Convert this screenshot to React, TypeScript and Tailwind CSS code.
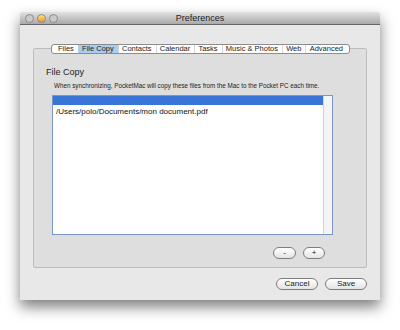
import React from 'react';

const tabs = ['Files', 'File Copy', 'Contacts', 'Calendar', 'Tasks', 'Music & Photos', 'Web', 'Advanced'];

const Light: React.FC<{ color: string }> = ({ color }) => (
  <span className={`block w-[9px] h-[9px] rounded-full border border-[#8a8a8a] ${color}`} />
);

const Pill: React.FC<{ label: string; className?: string }> = ({ label, className = '' }) => (
  <button
    className={`h-[12px] rounded-full border border-[#7d7d7d] bg-gradient-to-b from-white to-[#e4e4e4] text-[8px] leading-none text-[#222] flex items-center justify-center ${className}`}
  >
    {label}
  </button>
);

const App: React.FC = () => {
  return (
    <div className="w-[400px] h-[330px] bg-white overflow-hidden" style={{ fontFamily: '"Liberation Sans", Arial, sans-serif' }}>
      <div className="ml-[20px] mt-[12px] w-[360px] h-[288px] flex flex-col bg-[#e8e8e8] shadow-[0_7px_14px_rgba(0,0,0,0.5)] rounded-t-[3px]">
        {/* Title bar */}
        <div className="h-[13px] relative flex items-center justify-center bg-gradient-to-b from-[#e2e2e2] to-[#a9a9a9] border-b border-[#666] rounded-t-[3px]">
          <div className="absolute left-[5px] top-[2px] flex gap-[3px]">
            <Light color="bg-[#c9c9c9]" />
            <Light color="bg-gradient-to-b from-[#ffe27a] to-[#f19a1c]" />
            <Light color="bg-[#c9c9c9]" />
          </div>
          <span className="text-[9px] leading-none text-[#222]">Preferences</span>
        </div>

        {/* Body */}
        <div className="flex-1 flex flex-col px-[13px] pt-[23px]">
          <div className="relative h-[220px] border border-[#bdbdbd] bg-[#dedede] rounded-[2px]">
            <div className="absolute left-[17px] top-[-5px] h-[10px] w-[299px] flex items-center justify-between px-[2px] bg-white border border-[#8c8c8c] rounded-[3px] text-[7.5px] leading-none text-[#222] whitespace-nowrap">
              {tabs.map((t, i) => (
                <React.Fragment key={t}>
                  {i > 0 && <span className="w-px h-full bg-[#d6d6d6]" />}
                  <span className={`h-full flex items-center px-[4px] ${t === 'File Copy' ? 'bg-[#a9cdf0]' : ''}`}>{t}</span>
                </React.Fragment>
              ))}
            </div>

            <div className="pt-[19px] pl-[12px] text-[9px] leading-none text-[#222]">File Copy</div>
            <div className="pt-[6px] pl-[20px] text-[6.3px] leading-none text-[#222] whitespace-nowrap">
              When synchronizing, PocketMac will copy these files from the Mac to the Pocket PC each time.
            </div>

            <div className="mt-[6px] ml-[18px] w-[281px] h-[140px] border border-[#7a96c4] bg-white flex">
              <div className="flex-1 flex flex-col">
                <div className="h-[9px] bg-[#3875d7]" />
                <div className="pt-[3px] pl-[3px] text-[8px] leading-none text-[#111]">/Users/polo/Documents/mon document.pdf</div>
              </div>
              <div className="w-[9px] border-l border-[#d4d4d4] bg-[#f4f4f4]" />
            </div>

            <div className="mt-[12px] mr-[41px] flex justify-end gap-[7px]">
              <Pill label="-" className="w-[23px]" />
              <Pill label="+" className="w-[22px]" />
            </div>
          </div>

          <div className="mt-[10px] flex justify-end gap-[7px]">
            <Pill label="Cancel" className="w-[42px]" />
            <Pill label="Save" className="w-[42px]" />
          </div>
        </div>
      </div>
    </div>
  );
};

export default App;
